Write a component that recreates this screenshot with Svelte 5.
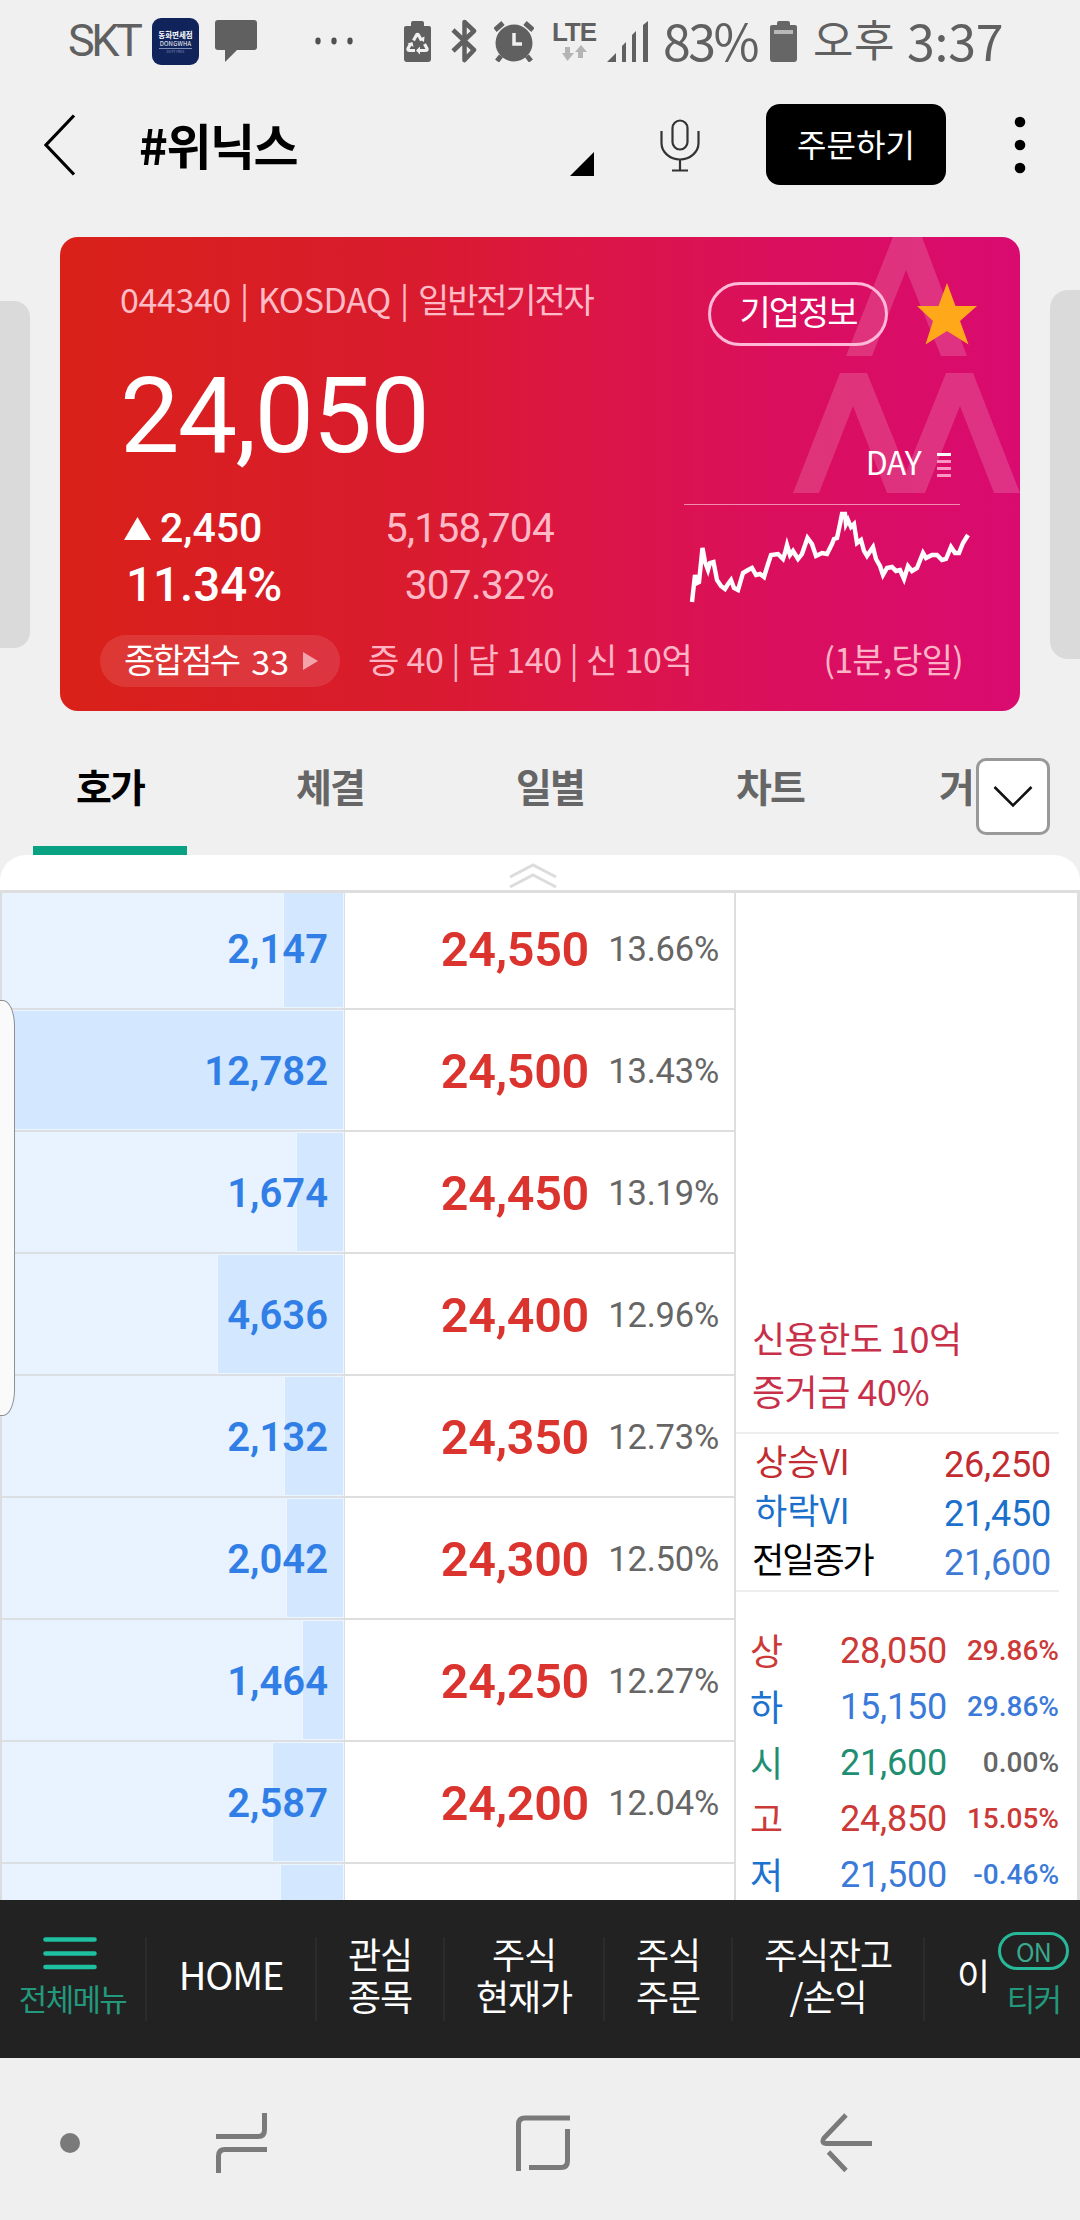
<script lang="ts">
  const MAX_BAR = 341;

  const asks = [
    { qty: "2,147", price: "24,550", rate: "13.66%", bar: 59 },
    { qty: "12,782", price: "24,500", rate: "13.43%", bar: MAX_BAR },
    { qty: "1,674", price: "24,450", rate: "13.19%", bar: 46 },
    { qty: "4,636", price: "24,400", rate: "12.96%", bar: 125 },
    { qty: "2,132", price: "24,350", rate: "12.73%", bar: 58 },
    { qty: "2,042", price: "24,300", rate: "12.50%", bar: 56 },
    { qty: "1,464", price: "24,250", rate: "12.27%", bar: 40 },
    { qty: "2,587", price: "24,200", rate: "12.04%", bar: 70 },
    { qty: "", price: "", rate: "", bar: 62 },
  ];

  const limits = [
    { label: "상승VI", value: "26,250", tone: "up-dark", indent: true },
    { label: "하락VI", value: "21,450", tone: "down-dark", indent: true },
    { label: "전일종가", value: "21,600", tone: "prev", indent: false },
  ];

  const summary = [
    { label: "상", value: "28,050", rate: "29.86%", tone: "up" },
    { label: "하", value: "15,150", rate: "29.86%", tone: "down" },
    { label: "시", value: "21,600", rate: "0.00%", tone: "flat" },
    { label: "고", value: "24,850", rate: "15.05%", tone: "up" },
    { label: "저", value: "21,500", rate: "-0.46%", tone: "down" },
  ];

  const tabs = ["호가", "체결", "일별", "차트", "거"];

  const menus = [
    { lines: ["HOME"], width: 170 },
    { lines: ["관심", "종목"], width: 128 },
    { lines: ["주식", "현재가"], width: 160 },
    { lines: ["주식", "주문"], width: 128 },
    { lines: ["주식잔고", "/손익"], width: 192 },
  ];

  let active = $state(0);
</script>

<div class="screen">
  <div class="status">
    <span class="carrier">SKT</span>
    <div class="app-badge">
      <b>동화면세점</b>
      <span>DONGWHA</span>
      <i></i>
      <small>DUTY FREE</small>
    </div>
    <svg class="chat" width="42" height="42" viewBox="0 0 42 42">
      <path d="M3 0h36q3 0 3 3v24q0 3-3 3H22L10 42V30H3q-3 0-3-3V3q0-3 3-3z" fill="#606060" />
    </svg>
    <svg class="dots" width="38" height="8" viewBox="0 0 38 8" fill="#505050">
      <ellipse cx="3" cy="4" rx="2.7" ry="3.4" /><ellipse cx="19" cy="4" rx="2.7" ry="3.4" /><ellipse cx="35" cy="4" rx="2.7" ry="3.4" />
    </svg>
    <svg class="saver" width="27" height="41" viewBox="0 0 27 41">
      <path d="M7 5V2q0-2 2-2h9q2 0 2 2v3h5q2 0 2 2v31q0 3-3 3H3q-3 0-3-3V7q0-2 2-2z" fill="#606060" />
      <g fill="none" stroke="#f0f0f0" stroke-width="3.2">
        <path d="M9.5 19.5l3-5.5q1-1.500 2 0l3 5.500" /><path d="M20.500 23l2.500 4.500q.5 2-1.500 2H16" /><path d="M6.500 23L4 27.500q-.5 2 1.500 2H11" />
      </g>
      <path d="M15 18l5 3 .5-5.500zM16 25.500v8l-4-4zM3.500 22.500l5-1.500 1 5z" fill="#f0f0f0" />
    </svg>
    <svg class="bt" width="27" height="44" viewBox="0 0 27 44" fill="none" stroke="#606060" stroke-width="4.500" stroke-linejoin="round">
      <path d="M2 11l21 20-9.500 10V3L23 12 2 32" />
    </svg>
    <svg class="alarm" width="40" height="41" viewBox="0 0 40 41">
      <circle cx="20" cy="22" r="18.500" fill="#606060" />
      <path d="M1 9l8-7M39 9l-8-7M7 35l-4 5M33 35l4 5" stroke="#606060" stroke-width="5" />
      <path d="M20 12v11h8" fill="none" stroke="#f0f0f0" stroke-width="3.500" />
    </svg>
    <div class="lte">
      <span>LTE</span>
      <svg width="25" height="16" viewBox="0 0 25 16" fill="#b4b4b4">
        <path d="M3 2h5v6h4l-6.500 8L0 8h3zM16 13h5V7h4l-6-7-6 7h3z" />
      </svg>
    </div>
    <svg class="signal" width="41" height="41" viewBox="0 0 41 41" fill="#606060">
      <path d="M0 41l9-9v9zM15 25l4-4v20h-4zM25 14l4-4v31h-4zM36 4l5-4v41h-5z" />
    </svg>
    <span class="pct">83%</span>
    <svg class="battery" width="27" height="41" viewBox="0 0 27 41">
      <path d="M7 4V2q0-2 2-2h9q2 0 2 2v2h5q2 0 2 2v32q0 3-3 3H3q-3 0-3-3V6q0-2 2-2z" fill="#666" />
      <path d="M4 9h19v4H4z" fill="#b8b8b8" />
    </svg>
    <span class="ampm">오후</span>
    <span class="clock">3:37</span>
  </div>

  <header>
    <svg class="back" width="32" height="62" viewBox="0 0 32 62" fill="none" stroke="#000" stroke-width="3.200">
      <path d="M30 1.500L2 31l28 29.500" />
    </svg>
    <h1>#위닉스</h1>
    <svg class="corner" width="24" height="24" viewBox="0 0 24 24"><path d="M24 0v24H0z" /></svg>
    <svg class="mic" width="40" height="54" viewBox="0 0 40 54" fill="none" stroke="#333" stroke-width="2.200">
      <rect x="12.500" y="1.500" width="15" height="29" rx="7.500" />
      <path d="M1.500 12v12a18.500 16.500 0 0 0 37 0V12M20 41v10M12 51.500h16" />
    </svg>
    <button class="order">주문하기</button>
    <svg class="more" width="12" height="60" viewBox="0 0 12 60">
      <circle cx="6" cy="7" r="5.300" /><circle cx="6" cy="30" r="5.300" /><circle cx="6" cy="53" r="5.300" />
    </svg>
  </header>

  <div class="carousel">
    <div class="peek left"></div>
    <section class="card">
      <svg class="mark" width="228" height="256" viewBox="0 0 228 256" fill="#fff" fill-opacity=".155">
        <path d="M101 0h29l45 119h-26L114 33 80 119H54z" />
        <path d="M48 136h27l39.500 98 39.500-98h27l47 120h-26L168 169l-35 87H95L61 169 27 256H1z" />
      </svg>

      <div class="card-top">
        <p class="meta">044340 | KOSDAQ | <span>일반전기전자</span></p>
        <button class="info">기업정보</button>
        <svg class="star" width="60" height="62" viewBox="0 0 60 62">
          <path d="M30 0l8.500 23H60L43 38l8.500 23.500L30 48 8.500 61.500 16 38 0 23h21.500z" fill="#ffa91a" />
        </svg>
      </div>

      <div class="card-main">
        <div class="figures">
          <div class="price">24,050</div>
          <div class="row">
            <span class="diff">
              <svg width="27" height="23" viewBox="0 0 27 23"><path d="M13.500 0L27 23H0z" fill="#fff" /></svg>
              2,450
            </span>
            <span class="sub">5,158,704</span>
          </div>
          <div class="row">
            <span class="ratio">11.34%</span>
            <span class="sub">307.32%</span>
          </div>
        </div>
        <div class="chart">
          <div class="day">
            DAY
            <div class="bars"><i></i><i></i><i></i><i></i></div>
          </div>
          <svg width="300" height="110" viewBox="0 0 300 110" fill="none">
            <path d="M4 4.500h276" stroke="#f08cb0" stroke-width="1.200" />
            <polyline
              stroke="#fff"
              stroke-width="4.400"
              points="12,102 15,75 17,83 19,82 22.500,48 25,62 28,70 30,63 33.500,62 37,80 41,86 45,89 48,84 51,80 54,88 58,90 63,73 68,70 72,68 76,75 80,74 84,77 88,64 91,55 98,54 103,59 105,53 107,45 110,55 113,51 118,59 122,54 127.500,38 132,44 136,56 142,53 147,54 152,44 154,39 157,38 160,24 162,14 165,14 166,24 168,20 171,27 174,24 177,43 181,40 184,51 187,56 193,47 196,59 200,66 203,75 207,68 212,67 216,71 220,70 224,79 228,66 232,71 237,68 243,53 246,58 252,55 257,55 262,60 266,59 271,47 275,53 279,53 283,43 288,35"
            />
          </svg>
        </div>
      </div>

      <div class="card-foot">
        <div class="score">
          <span>종합점수</span><em>33</em>
          <svg width="15" height="18" viewBox="0 0 15 18"><path d="M0 0l15 9-15 9z" fill="#f5a3ab" /></svg>
        </div>
        <p class="margin">증 40 | 담 140 | 신 10억</p>
        <p class="period">(1분,당일)</p>
      </div>
    </section>
    <div class="peek right"></div>
  </div>

  <nav class="tabs">
    {#each tabs as tab, i}
      <button class:active={i === active} class:cut={i === 4} onclick={() => (active = i)}>{tab}</button>
    {/each}
    <div class="expand">
      <svg width="40" height="24" viewBox="0 0 40 24" fill="none" stroke="#111" stroke-width="2.600"><path d="M1.500 2L20 20.500 38.500 2" /></svg>
    </div>
  </nav>

  <main>
    <div class="grip">
      <svg width="48" height="26" viewBox="0 0 48 26" fill="none" stroke="#dcdcdc" stroke-width="3">
        <path d="M1 14L24 2l23 12M1 24l23-12 23 12" />
      </svg>
    </div>

    <div class="board">
      <div class="asks">
        {#each asks as a}
          <div class="ask">
            <div class="qty">
              <div class="bar" style="width: {a.bar}px"></div>
              <span>{a.qty}</span>
            </div>
            <div class="quote">
              <strong>{a.price}</strong>
              <span>{a.rate}</span>
            </div>
          </div>
        {/each}
      </div>

      <aside>
        <div class="credit">
          <p>신용한도 10억</p>
          <p>증거금 40%</p>
        </div>
        <div class="limits">
          {#each limits as l}
            <div class="limit {l.tone}">
              <span class:indent={l.indent}>{l.label}</span>
              <b>{l.value}</b>
            </div>
          {/each}
        </div>
        <div class="summary">
          {#each summary as s}
            <div class="sum {s.tone}">
              <span>{s.label}</span>
              <b>{s.value}</b>
              <em>{s.rate}</em>
            </div>
          {/each}
        </div>
      </aside>
      <div class="handle"></div>
    </div>
  </main>

  <footer>
    <div class="all">
      <svg width="54" height="33" viewBox="0 0 54 33" stroke="#1fc0a2" stroke-width="4.600" stroke-linecap="round">
        <path d="M2.500 2.500h49M2.500 16.500h49M2.500 30h49" />
      </svg>
      <span>전체메뉴</span>
    </div>
    {#each menus as m}
      <div class="menu" class:single={m.lines.length === 1} style="width: {m.width}px">
        {#each m.lines as line}<span>{line}</span>{/each}
      </div>
    {/each}
    <div class="menu partial"><span>이</span></div>
    <div class="ticker">
      <div class="on">ON</div>
      <span>티커</span>
    </div>
  </footer>

  <div class="sysnav">
    <svg class="pin" width="20" height="20" viewBox="0 0 20 20"><circle cx="10" cy="10" r="10" fill="#7a7a7a" /></svg>
    <svg class="recents" width="52" height="60" viewBox="0 0 52 60" fill="none" stroke="#7a7a7a" stroke-width="5">
      <path d="M0 23.500h42q6.500 0 6.500-6.500V0M51 36.500H9q-6.500 0-6.500 6.500v17" />
    </svg>
    <svg class="home" width="54" height="56" viewBox="0 0 54 56" fill="none" stroke="#7a7a7a" stroke-width="5">
      <path d="M2.500 56V9.500q0-6.500 6.500-6.500h45M51.500 14v32q0 6.500-6.500 6.500H13" />
    </svg>
    <svg class="return" width="54" height="60" viewBox="0 0 54 60" fill="none" stroke="#7a7a7a" stroke-width="4.800">
      <path d="M26 2L4 25q-3 5 2 5.500h46M8.500 39L26 57.500" />
    </svg>
  </div>
</div>

<style>
  :global(body) {
    margin: 0;
    background: #f0f0f0;
  }

  .screen {
    width: 1080px;
    height: 2220px;
    overflow: hidden;
    display: flex;
    flex-direction: column;
    background: #f0f0f0;
    font-family: "Noto Sans CJK KR", "Noto Sans", sans-serif;
    white-space: nowrap;
  }

  .screen * {
    box-sizing: border-box;
  }

  svg {
    display: block;
    flex: none;
  }

  p,
  h1 {
    margin: 0;
  }

  button {
    border: 0;
    padding: 0;
    background: none;
    font-family: inherit;
  }

  em,
  i {
    font-style: normal;
  }

  /* status bar */
  .status {
    flex: none;
    height: 82px;
    display: flex;
    align-items: center;
    padding-left: 68px;
    color: #606060;
    line-height: 82px;
  }

  .carrier {
    width: 84px;
    font: 400 45px/82px Roboto, sans-serif;
    letter-spacing: -3.5px;
  }

  .app-badge {
    width: 47px;
    height: 47px;
    flex: none;
    border-radius: 9px;
    background: #10235a;
    color: #fff;
    display: flex;
    flex-direction: column;
    align-items: center;
    padding-top: 12px;
    line-height: 8px;
  }

  .app-badge b {
    font-size: 7.5px;
    line-height: 9px;
  }

  .app-badge span {
    font-size: 6px;
    line-height: 9px;
    letter-spacing: 0.2px;
  }

  .app-badge i {
    width: 33px;
    height: 1px;
    background: #8490b4;
  }

  .app-badge small {
    font-size: 3.5px;
    line-height: 6px;
    color: #8490b4;
  }

  .chat { margin-left: 16px; }
  .dots { margin-left: 58px; }
  .saver { margin-left: 51px; }
  .bt { margin-left: 20px; }
  .alarm { margin-left: 16px; }

  .lte {
    width: 42px;
    margin-left: 19px;
    display: flex;
    flex-direction: column;
    align-items: center;
    gap: 2px;
  }

  .lte span {
    font: 700 26px/22px "Liberation Sans", sans-serif;
    letter-spacing: -1px;
  }

  .signal { margin-left: 12px; }

  .pct {
    width: 106px;
    padding-left: 15px;
    font-size: 50px;
    letter-spacing: -2.5px;
    padding-bottom: 5px;
  }

  .battery { margin-left: 16px; }

  .ampm {
    margin-left: 16px;
    width: 94px;
    font-size: 44px;
    letter-spacing: 0.5px;
    padding-bottom: 6px;
  }

  .clock {
    font-size: 50px;
    letter-spacing: -0.2px;
    padding-bottom: 5px;
  }

  /* title bar */
  header {
    flex: none;
    height: 155px;
    display: flex;
    align-items: flex-start;
    padding-left: 44px;
  }

  .back { margin-top: 32px; }

  h1 {
    width: 430px;
    margin-left: 63px;
    font-size: 49px;
    line-height: 124px;
    font-weight: 700;
    letter-spacing: -1.5px;
  }

  .corner { margin-top: 70px; margin-left: 1px; }
  .mic { margin-top: 37px; margin-left: 66px; }

  .order {
    width: 180px;
    height: 81px;
    margin: 22px 0 0 66px;
    border-radius: 14px;
    background: #000;
    color: #fff;
    font-size: 32px;
    line-height: 76px;
    padding-bottom: 3px;
    font-weight: 400;
  }

  .more { margin: 33px 0 0 68px; }

  /* stock card */
  .carousel {
    flex: none;
    height: 474px;
    display: flex;
    justify-content: space-between;
  }

  .peek {
    width: 30px;
    background: #dadada;
  }

  .peek.left {
    height: 347px;
    margin-top: 64px;
    border-radius: 0 16px 16px 0;
  }

  .peek.right {
    height: 369px;
    margin-top: 53px;
    border-radius: 18px 0 0 18px;
  }

  .card {
    position: relative;
    width: 960px;
    height: 474px;
    border-radius: 18px;
    overflow: hidden;
    color: #fff;
    background: linear-gradient(90deg, #d92119 0%, #d91b2f 38%, #dc1547 56%, #da0f5e 76%, #d90b70 100%);
  }

  .mark {
    position: absolute;
    right: 0;
    top: 0;
  }

  .card-top {
    position: relative;
    height: 110px;
    display: flex;
    align-items: flex-start;
    padding: 45px 43px 0 60px;
  }

  .meta {
    font-size: 34px;
    line-height: 34px;
    color: #ffbcc6;
    letter-spacing: -0.4px;
    word-spacing: 2px;
  }

  .meta span {
    letter-spacing: -2.2px;
  }

  .info {
    width: 180px;
    height: 64px;
    margin-left: auto;
    border: 3px solid #ffb8d8;
    border-radius: 32px;
    color: #fff;
    font-size: 34px;
    line-height: 52px;
    padding-bottom: 6px;
    letter-spacing: -2px;
  }

  .star { margin: 1px 0 0 29px; }

  .card-main {
    position: relative;
    height: 288px;
    display: flex;
    justify-content: space-between;
    font-family: Roboto, sans-serif;
  }

  .figures {
    width: 494px;
    padding-left: 60px;
  }

  .price {
    font-size: 106px;
    line-height: 139px;
    height: 153px;
    letter-spacing: -1.8px;
  }

  .row {
    display: flex;
    justify-content: space-between;
    align-items: center;
    height: 57px;
    line-height: 57px;
  }

  .diff {
    display: flex;
    align-items: center;
    gap: 9px;
    padding-left: 4px;
    font-size: 41px;
    font-weight: 500;
  }

  .ratio {
    padding-left: 6px;
    font-size: 47.5px;
    font-weight: 500;
  }

  .sub {
    font-size: 40.5px;
    letter-spacing: -0.7px;
    color: #ffb9c6;
  }

  .chart {
    width: 340px;
  }

  .day {
    height: 153px;
    padding: 96px 69px 0 0;
    display: flex;
    justify-content: flex-end;
    font: 32px/37px "Noto Sans CJK KR", sans-serif;
    letter-spacing: -0.8px;
  }

  .bars {
    display: flex;
    flex-direction: column;
    gap: 4px;
    margin: 10px 0 0 16px;
  }

  .bars i {
    width: 14px;
    height: 3px;
    background: #ff94c0;
  }

  .bars i:first-child { background: #fff; }

  .card-foot {
    position: relative;
    height: 52px;
    display: flex;
    align-items: center;
    padding: 0 57px 0 40px;
    font-size: 34px;
    line-height: 48px;
    color: #ffb4c5;
  }

  .card-foot p { padding-bottom: 4px; }

  .score {
    width: 240px;
    height: 52px;
    border-radius: 26px;
    background: rgba(255, 255, 255, 0.11);
    color: #fff;
    display: flex;
    align-items: center;
    padding-left: 24px;
    line-height: 46px;
  }

  .score span {
    letter-spacing: -2.7px;
    padding-bottom: 4px;
  }

  .score em {
    margin: 0 14px 0 13px;
  }

  .margin {
    margin-left: 28px;
    letter-spacing: -0.4px;
    word-spacing: 0.5px;
  }

  .period {
    margin-left: auto;
    letter-spacing: -0.8px;
  }

  /* tabs */
  .tabs {
    flex: none;
    height: 144px;
    display: flex;
  }

  .tabs button {
    flex: none;
    width: 154px;
    height: 144px;
    margin: 0 33px;
    border-bottom: 9px solid transparent;
    color: #666;
    font-size: 39px;
    font-weight: 700;
    line-height: 60px;
    padding-top: 12px;
    letter-spacing: -2px;
  }

  .tabs button.active {
    color: #000;
    border-color: #08a282;
  }

  .tabs button.cut {
    width: 32px;
    margin: 0 0 0 59px;
    overflow: hidden;
    text-align: left;
  }

  .expand {
    width: 74px;
    height: 77px;
    margin: 47px 0 0 5px;
    border: 3px solid #999;
    border-radius: 10px;
    background: #fff;
    display: flex;
    align-items: center;
    justify-content: center;
  }

  /* order book */
  main {
    flex: none;
    height: 1045px;
    background: #fff;
    border-radius: 26px 26px 0 0;
    overflow: hidden;
  }

  .grip {
    height: 38px;
    padding: 8px 0 0 509px;
    border-bottom: 3px solid #dedede;
  }

  .board {
    position: relative;
    display: flex;
    height: 1007px;
    border-left: 2px solid #dadcde;
    border-right: 3px solid #dedede;
  }

  .asks {
    width: 732px;
    flex: none;
    margin-top: -5px;
    height: 1012px;
    overflow: hidden;
    clip-path: inset(5px 0 0 0);
  }

  .ask {
    display: flex;
    height: 122px;
    font-family: Roboto, sans-serif;
  }

  .qty {
    position: relative;
    width: 343px;
    border-right: 2px solid #dbdfe3;
    border-bottom: 2px solid #dbdfe3;
    background: #e8f3ff;
    display: flex;
    align-items: center;
    justify-content: flex-end;
    padding: 2px 15px 0 0;
    color: #317fe6;
    font-size: 40px;
    font-weight: 600;
  }

  .bar {
    position: absolute;
    right: 0;
    top: 1px;
    bottom: 1px;
    background: #d3e7ff;
    box-shadow: 0 0 0 1px #edf6ff;
  }

  .qty span { position: relative; }

  .quote {
    flex: 1;
    border-bottom: 2px solid #dedede;
    display: flex;
    align-items: center;
    justify-content: flex-end;
    padding: 2px 15px 0 0;
  }

  .quote strong {
    color: #db342e;
    font-size: 48.5px;
    font-weight: 600;
    letter-spacing: -0.3px;
  }

  .quote span {
    width: 130px;
    text-align: right;
    color: #666;
    font-size: 34.5px;
    letter-spacing: -0.2px;
  }

  aside {
    flex: 1;
    border-left: 2px solid #dedede;
  }

  .credit {
    height: 541px;
    margin-right: 18px;
    border-bottom: 2px solid #eee;
    padding: 418px 0 0 16px;
    color: #c8304a;
    font-size: 36px;
    line-height: 53px;
    letter-spacing: -0.5px;
  }

  .limits {
    height: 158px;
    margin-right: 18px;
    padding: 5px 8px 0 16px;
    border-bottom: 2px solid #eee;
  }

  .limit {
    display: flex;
    justify-content: space-between;
    height: 49px;
    line-height: 49px;
  }

  .limit span {
    font-size: 35px;
    letter-spacing: -2px;
    margin-top: -4px;
  }

  .limit .indent {
    padding-left: 3px;
    letter-spacing: 0;
  }

  .limit b,
  .sum b {
    font: 400 36px/53px Roboto, sans-serif;
    letter-spacing: -0.2px;
  }

  .up-dark { color: #c22c30; }
  .down-dark { color: #1b70cc; }
  .prev { color: #3d7ad6; }
  .prev span { color: #000; }

  .summary {
    margin-right: 18px;
    padding: 31px 0 0 14px;
  }

  .sum {
    display: flex;
    height: 56px;
    align-items: center;
  }

  .sum span {
    width: 60px;
    font-size: 36px;
    line-height: 50px;
    padding-bottom: 4px;
  }

  .sum b {
    width: 137px;
    text-align: right;
  }

  .sum em {
    flex: 1;
    text-align: right;
    font: 500 28px/56px Roboto, sans-serif;
  }

  .sum.up { color: #cc3a38; }
  .sum.down { color: #3b7ad9; }
  .sum.down span { color: #1b72cf; }
  .sum.flat { color: #1f8f73; }
  .sum.flat em { color: #666; }

  /* edge panel handle floats over the board */
  .handle {
    position: absolute;
    left: -5px;
    top: 107px;
    width: 18px;
    height: 416px;
    border: 1px solid #8b9096;
    border-radius: 0 12px 12px 0 / 0 26px 26px 0;
    background: #fafafa;
  }

  /* bottom menu */
  footer {
    flex: none;
    height: 158px;
    background: #222;
    display: flex;
    align-items: center;
    color: #fff;
  }

  .all {
    width: 147px;
    height: 84px;
    border-right: 2px solid #2b2b2b;
    display: flex;
    flex-direction: column;
    align-items: center;
    color: #22987c;
  }

  .all span,
  .ticker span {
    margin-top: 8px;
    font-size: 31px;
    line-height: 40px;
    letter-spacing: -1.7px;
  }

  .all svg { margin-right: 6px; }

  .menu {
    flex: none;
    height: 84px;
    border-right: 2px solid #2b2b2b;
    display: flex;
    flex-direction: column;
    align-items: center;
    justify-content: center;
    font-size: 36px;
    line-height: 42px;
    letter-spacing: -1.2px;
    padding-bottom: 10px;
  }

  .menu.single {
    font-size: 38px;
  }

  .menu.partial {
    width: 61px;
    padding-left: 32px;
    border: 0;
    align-items: flex-start;
    overflow: hidden;
  }

  .ticker {
    width: 71px;
    height: 94px;
    margin-left: 12px;
    display: flex;
    flex-direction: column;
    align-items: center;
    color: #22987c;
  }

  .on {
    width: 71px;
    height: 38px;
    border: 3px solid #26b898;
    border-radius: 19px;
    text-align: center;
    font-size: 25px;
    line-height: 33px;
    letter-spacing: -0.8px;
    color: #3aa98e;
  }

  /* system navigation */
  .sysnav {
    flex: none;
    height: 162px;
    background: #efefef;
    display: flex;
    align-items: center;
    padding: 8px 0 0 60px;
  }

  .recents { margin-left: 136px; }
  .home { margin-left: 248px; }
  .return { margin-left: 250px; }
</style>
